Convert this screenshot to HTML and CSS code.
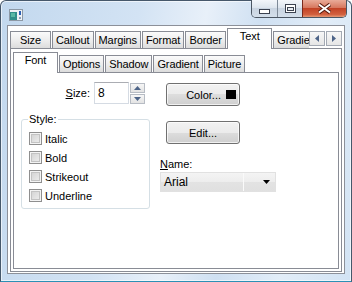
FILE: index.html
```html
<!DOCTYPE html>
<html lang="en">
<head>
  <meta charset="UTF-8">
  <title>Font properties</title>
  <link rel="stylesheet" href="styles.css">
</head>
<body>
  <div class="window">
    <div class="titlebar">
      <svg class="app-icon" width="14" height="12" viewBox="0 0 14 12">
        <rect x="0.5" y="0.5" width="13" height="11" fill="#eef2f6" stroke="#8d99a6"/>
        <rect x="1" y="3" width="7" height="8" fill="#2f8f8a"/>
        <rect x="2" y="4" width="4" height="4" fill="#58b8a4"/>
        <rect x="10" y="2" width="2" height="4" fill="#2b5fb4"/>
        <rect x="10" y="8" width="2" height="2" fill="#8fa3bb"/>
      </svg>
      <div class="caption-buttons">
        <span class="cap cap-min">
          <svg width="11" height="5" viewBox="0 0 11 5"><rect x="0.5" y="0.5" width="10" height="4" fill="#fff" stroke="#3b4250"/></svg>
        </span>
        <span class="cap cap-max">
          <svg width="11" height="9" viewBox="0 0 11 9"><rect x="0.5" y="0.5" width="10" height="8" fill="#fff" stroke="#3b4250"/><rect x="2.5" y="3.5" width="6" height="3" fill="#e7ecf2" stroke="#3b4250"/></svg>
        </span>
        <span class="cap cap-close">
          <svg width="15" height="11" viewBox="0 0 15 11"><path d="M2 1.5 L13 9.5 M13 1.5 L2 9.5" stroke="#5a1e12" stroke-width="4"/><path d="M2 1.5 L13 9.5 M13 1.5 L2 9.5" stroke="#fff" stroke-width="2"/></svg>
        </span>
      </div>
    </div>

    <div class="client">
      <div class="tabstrip">
        <div class="tabs">
          <span class="tab">Size</span>
          <span class="tab">Callout</span>
          <span class="tab">Margins</span>
          <span class="tab">Format</span>
          <span class="tab">Border</span>
          <span class="tab active">Text</span>
          <span class="tab">Gradient</span>
        </div>
        <div class="scroll">
          <span class="arrow"><svg width="4" height="7" viewBox="0 0 4 7"><path d="M4 0 L0 3.5 L4 7 Z" fill="#4d6488"/></svg></span>
          <span class="arrow"><svg width="4" height="7" viewBox="0 0 4 7"><path d="M0 0 L4 3.5 L0 7 Z" fill="#4d6488"/></svg></span>
        </div>
      </div>

      <div class="panel">
        <div class="tabstrip">
          <div class="tabs">
            <span class="tab active">Font</span>
            <span class="tab">Options</span>
            <span class="tab">Shadow</span>
            <span class="tab">Gradient</span>
            <span class="tab">Picture</span>
          </div>
        </div>

        <div class="panel page">
          <div class="font-page">
            <div class="col-left">
              <div class="size-row">
                <label><u>S</u>ize:</label>
                <span class="textbox">8</span>
                <span class="spinner">
                  <span class="spin"><svg width="7" height="4" viewBox="0 0 7 4"><path d="M0 4 L3.5 0 L7 4 Z" fill="#4d6488"/></svg></span>
                  <span class="spin"><svg width="7" height="4" viewBox="0 0 7 4"><path d="M0 0 L3.5 4 L7 0 Z" fill="#4d6488"/></svg></span>
                </span>
              </div>
              <fieldset class="group">
                <legend>Style:</legend>
                <div class="check"><span class="box"></span>Italic</div>
                <div class="check"><span class="box"></span>Bold</div>
                <div class="check"><span class="box"></span>Strikeout</div>
                <div class="check"><span class="box"></span>Underline</div>
              </fieldset>
            </div>

            <div class="col-right">
              <span class="button color-btn">Color...<span class="swatch"></span></span>
              <span class="button edit-btn">Edit...</span>
              <label class="name-label"><u>N</u>ame:</label>
              <div class="combo">
                <span class="combo-text">Arial</span>
                <span class="combo-drop"><svg width="7" height="4" viewBox="0 0 7 4"><path d="M0 0 L3.5 4 L7 0 Z" fill="#000"/></svg></span>
              </div>
            </div>
          </div>
        </div>
      </div>
    </div>
  </div>
</body>
</html>
```

FILE: styles.css
```css
body {
  margin: 0;
  font-family: "Liberation Sans", Arial, sans-serif;
  font-size: 11px;
  color: #000;
  background: #fff;
}
.window {
  width: 352px;
  height: 282px;
  box-sizing: border-box;
  border: 1px solid #46586b;
  border-bottom-color: #2c90b5;
  border-radius: 6px 6px 0 0;
  background: linear-gradient(100deg, #c2d8ee 0%, #d3e3f4 35%, #e8f0f9 52%, #cfe0f2 66%, #e2edf8 82%, #d2e3f4 100%);
  box-shadow: inset 0 0 0 1px rgba(255, 255, 255, 0.6);
  display: flex;
  flex-direction: column;
}
.titlebar {
  height: 24px;
  flex-shrink: 0;
  display: flex;
  justify-content: space-between;
  align-items: flex-start;
  padding-left: 8px;
}
.app-icon {
  margin-top: 8px;
}
.caption-buttons {
  display: flex;
  margin-top: -1px;
  margin-right: 4px;
  border: 1px solid #4b5663;
  border-top: none;
  border-radius: 0 0 5px 5px;
  overflow: hidden;
}
.cap {
  height: 17px;
  display: flex;
  align-items: center;
  justify-content: center;
  box-sizing: border-box;
}
.cap-min {
  width: 26px;
  align-items: flex-end;
  padding-bottom: 3px;
  border-right: 1px solid #7d8997;
  background: linear-gradient(#f3f6fa, #dde5ee 45%, #c9d4e1 50%, #d4dfeb);
}
.cap-max {
  width: 25px;
  border-right: 1px solid #7a2a1c;
  background: linear-gradient(#f3f6fa, #dde5ee 45%, #c9d4e1 50%, #d4dfeb);
}
.cap-close {
  width: 43px;
  background: linear-gradient(#e9ab98, #d7785f 45%, #c24326 50%, #d2603f 85%, #e79a76);
}
.client {
  flex: 1;
  margin: 0 6px 7px;
  border: 1px solid #8c9099;
  background: #fff;
  padding: 2px 2px 1px;
  display: flex;
  flex-direction: column;
}
.tabstrip {
  display: flex;
  height: 21px;
  flex-shrink: 0;
  box-shadow: inset 0 -1px 0 #898c95;
}
.tabs {
  flex: 1;
  min-width: 0;
  display: flex;
  align-items: flex-end;
  overflow: hidden;
}
.tab {
  flex-shrink: 0;
  height: 17px;
  min-width: 41px;
  box-sizing: border-box;
  margin: 0 1px 1px 0;
  padding: 0 3px;
  border: 1px solid #898c95;
  border-bottom: none;
  background: linear-gradient(#fbfbfb, #ececec 55%, #dcdcdc);
  text-align: center;
  line-height: 16px;
  letter-spacing: -0.1px;
  white-space: nowrap;
}
.tab.active {
  height: 21px;
  min-width: 45px;
  margin-bottom: 0;
  background: #fff;
  line-height: 14px;
}
.scroll {
  display: flex;
  gap: 1px;
  margin-top: 3px;
  align-self: flex-start;
}
.arrow {
  width: 16px;
  height: 15px;
  box-sizing: border-box;
  border: 1px solid #a3a9b3;
  background: linear-gradient(#f7f7f7, #e6e6e6);
  display: flex;
  align-items: center;
  justify-content: center;
}
.panel {
  flex: 1;
  display: flex;
  flex-direction: column;
  border: 1px solid #898c95;
  border-top: none;
  background: #fff;
  padding: 3px 2px 2px;
}
.panel.page {
  padding: 9px 7px 0;
}
.font-page {
  display: grid;
  grid-template-columns: 129px 116px;
  column-gap: 10px;
  align-items: start;
}
.size-row {
  display: flex;
  justify-content: flex-end;
  align-items: center;
  gap: 4px;
  padding-right: 5px;
  height: 22px;
}
.textbox {
  width: 35px;
  height: 22px;
  box-sizing: border-box;
  border: 1px solid #d5dbe3;
  border-top-color: #abadb3;
  padding: 3px 3px 0;
  font-size: 12px;
  line-height: 14px;
}
.spinner {
  display: flex;
  flex-direction: column;
  gap: 1px;
  margin-left: -3px;
}
.spin {
  width: 15px;
  height: 10px;
  box-sizing: border-box;
  border: 1px solid #b7bcc4;
  background: linear-gradient(#f6f6f6, #e3e3e3);
  display: flex;
  align-items: center;
  justify-content: center;
}
.group {
  margin: 9px 0 0;
  padding: 3px 0 3px 7px;
  border: 1px solid #d5dfe5;
  border-radius: 3px;
  min-width: 0;
}
.group legend {
  padding: 0 1px;
  margin-left: -1px;
  line-height: 13px;
}
.check {
  display: flex;
  align-items: center;
  gap: 3px;
  height: 19px;
}
.box {
  width: 13px;
  height: 13px;
  box-sizing: border-box;
  border: 1px solid #8f8f8f;
  background: linear-gradient(135deg, #cfcfcf, #f1f1f1);
  box-shadow: inset 0 0 0 1px #f4f4f4, inset 0 0 0 2px #c3c3c3;
}
.col-right {
  display: flex;
  flex-direction: column;
  align-items: flex-start;
  padding-top: 1px;
}
.button {
  width: 74px;
  height: 23px;
  margin-left: 6px;
  box-sizing: border-box;
  border: 1px solid #707070;
  border-radius: 3px;
  background: linear-gradient(#f2f2f2, #ebebeb 50%, #dddddd 50%, #cfcfcf);
  box-shadow: inset 0 0 0 1px rgba(255, 255, 255, 0.7);
  display: flex;
  align-items: center;
  justify-content: center;
}
.color-btn {
  justify-content: flex-end;
  gap: 5px;
  padding-right: 3px;
}
.swatch {
  width: 10px;
  height: 9px;
  background: #000;
}
.edit-btn {
  margin-top: 15px;
}
.name-label {
  margin-top: 14px;
  line-height: 13px;
}
.combo {
  width: 116px;
  height: 20px;
  margin-top: 1px;
  box-sizing: border-box;
  border: 1px solid #e1e1e1;
  background: linear-gradient(#f4f4f4, #ededed 50%, #e3e3e3 50%, #e0e0e0);
  display: flex;
  align-items: center;
}
.combo-text {
  flex: 1;
  padding-left: 3px;
  font-size: 12px;
}
.combo-drop {
  width: 32px;
  height: 100%;
  box-sizing: border-box;
  border-left: 1px solid #fafafa;
  display: flex;
  align-items: center;
  justify-content: flex-end;
  padding-right: 5px;
}
```
